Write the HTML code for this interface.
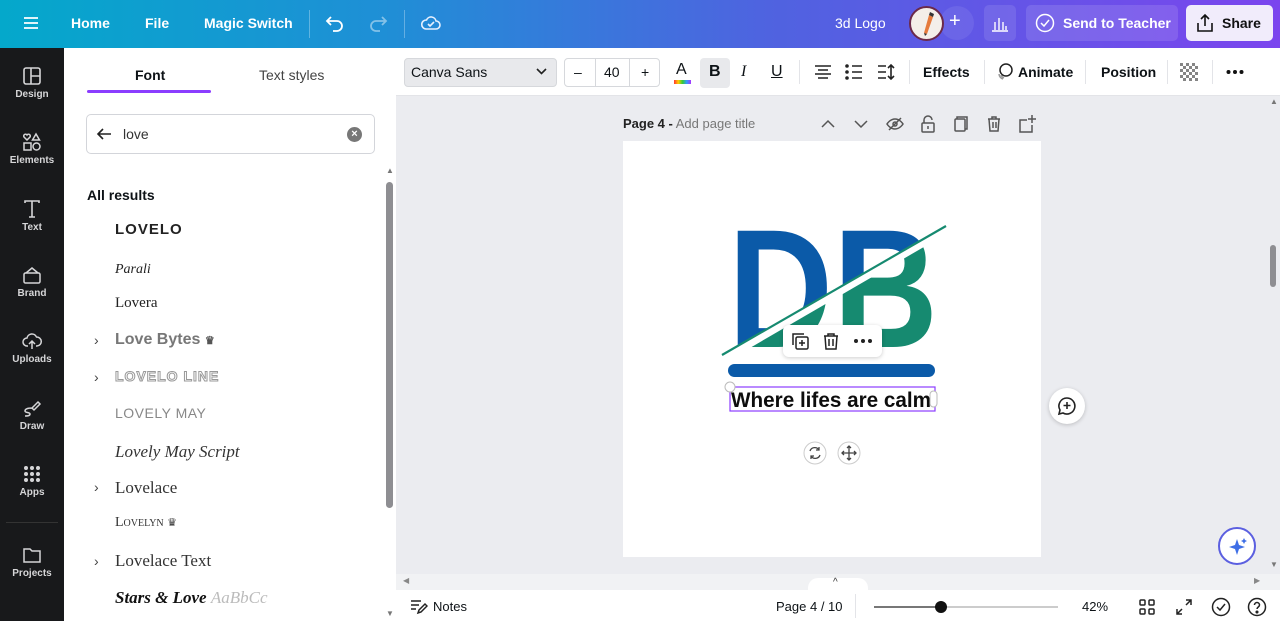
<!DOCTYPE html>
<html><head><meta charset="utf-8"><style>
*{box-sizing:border-box;margin:0;padding:0}
body{width:1280px;height:621px;overflow:hidden;font-family:"Liberation Sans",sans-serif;background:#ebecf0;position:relative;color:#0d1216}
.abs{position:absolute}
.top{left:0;top:0;width:1280px;height:48px;background:linear-gradient(90deg,#04a8cb 0%,#1f8fd6 30%,#4f63e0 60%,#7b45ee 100%)}
.top .t{position:absolute;top:15px;color:#fff;font-weight:bold;font-size:14px}
.side{left:0;top:48px;width:64px;height:573px;background:#18191b}
.side .it{position:absolute;left:0;width:64px;text-align:center;color:#d6d6d8;font-size:10px;font-weight:bold}
.side svg{display:block;margin:0 auto 3px}
.panel{left:64px;top:48px;width:332px;height:573px;background:#fff}
.tb{left:396px;top:48px;width:884px;height:48px;background:#fff;border-bottom:1px solid #e3e4e8}
.tb .t{position:absolute;top:16px;font-size:14px;font-weight:bold;color:#0d1216}
.font{position:absolute;left:34px;font-size:15px;color:#222}
.chev{position:absolute;left:30px;font-size:14px;color:#444}
.bot{left:396px;top:590px;width:884px;height:31px;background:#fff}
</style></head><body>
<div class="abs top">
  <svg class="abs" style="left:23px;top:15px" width="16" height="16" viewBox="0 0 16 16"><path d="M1 3h14M1 8h14M1 13h14" stroke="#fff" stroke-width="1.8"/></svg>
  <span class="t" style="left:71px">Home</span>
  <span class="t" style="left:145px">File</span>
  <span class="t" style="left:204px">Magic Switch</span>
  <div class="abs" style="left:309px;top:10px;width:1px;height:28px;background:rgba(255,255,255,.3)"></div>
  <svg class="abs" style="left:325px;top:13px" width="20" height="20" viewBox="0 0 20 20" fill="none" stroke="#fff" stroke-width="1.8"><path d="M6 4L2 8l4 4M2 8h10a5 5 0 010 10H8"/></svg>
  <svg class="abs" style="left:368px;top:13px" width="20" height="20" viewBox="0 0 20 20" fill="none" stroke="rgba(255,255,255,.45)" stroke-width="1.8"><path d="M14 4l4 4-4 4M18 8H8a5 5 0 000 10h4"/></svg>
  <div class="abs" style="left:404px;top:10px;width:1px;height:28px;background:rgba(255,255,255,.3)"></div>
  <svg class="abs" style="left:420px;top:12px" width="22" height="22" viewBox="0 0 22 22" fill="none" stroke="#e6f0ff" stroke-width="1.6"><path d="M6 17h10a4 4 0 000-8 5 5 0 00-9.5-1A4.5 4.5 0 006 17z"/><path d="M8 12l2 2 4-4"/></svg>
  <span class="t" style="left:835px;font-weight:normal;color:#fff">3d Logo</span>
  <div class="abs" style="left:940px;top:6px;width:34px;height:34px;border-radius:50%;background:rgba(255,255,255,.08)"></div>
  <div class="abs" style="left:909px;top:6px;width:35px;height:35px;border-radius:50%;background:#f4efe9;border:2px solid #6b2a4a"></div>
  <svg class="abs" style="left:917px;top:11px" width="20" height="26" viewBox="0 0 20 26"><path d="M7 22L12 4l4 2-6 17z" fill="#e57a3c"/><path d="M12 4l4 2 1-3-4-2z" fill="#333"/><path d="M7 22l3 1-2 2z" fill="#333"/></svg>
  <span class="t" style="left:949px;font-size:20px;top:10px;font-weight:normal">+</span>
  <div class="abs" style="left:984px;top:5px;width:32px;height:36px;border-radius:5px;background:rgba(255,255,255,.1)"></div>
  <svg class="abs" style="left:990px;top:13px" width="20" height="20" viewBox="0 0 20 20" stroke="#fff" stroke-width="1.4"><path d="M2 18h16M5 17V9M9 17V5M13 17V9M16 17v-4"/></svg>
  <div class="abs" style="left:1026px;top:5px;width:152px;height:36px;border-radius:5px;background:rgba(255,255,255,.12)"></div>
  <svg class="abs" style="left:1035px;top:13px" width="20" height="20" viewBox="0 0 20 20" fill="none" stroke="#fff" stroke-width="1.5"><circle cx="10" cy="10" r="8.5"/><path d="M6 10l3 3 5-6"/></svg>
  <span class="t" style="left:1063px">Send to Teacher</span>
  <div class="abs" style="left:1186px;top:5px;width:87px;height:36px;border-radius:5px;background:#f1ecfb"></div>
  <svg class="abs" style="left:1195px;top:13px" width="20" height="20" viewBox="0 0 20 20" fill="none" stroke="#111" stroke-width="1.6"><path d="M10 13V2M6 6l4-4 4 4M3 10v8h14v-8"/></svg>
  <span class="t" style="left:1222px;color:#111">Share</span>
</div>

<div class="abs side">
  <div class="it" style="top:18px"><svg width="20" height="20" viewBox="0 0 20 20" fill="none" stroke="#d6d6d8" stroke-width="1.6"><rect x="2" y="2" width="16" height="16" rx="2"/><path d="M9 2v16M9 10h9"/></svg>Design</div>
  <div class="it" style="top:84px"><svg width="20" height="20" viewBox="0 0 20 20" fill="none" stroke="#d6d6d8" stroke-width="1.5"><path d="M5 8L2 5a1.7 1.7 0 013-2 1.7 1.7 0 013 2z"/><path d="M14 2l3.5 6h-7z"/><rect x="2" y="11" width="7" height="7"/><circle cx="14.5" cy="14.5" r="3.5"/></svg>Elements</div>
  <div class="it" style="top:151px"><svg width="20" height="20" viewBox="0 0 20 20" fill="none" stroke="#d6d6d8" stroke-width="1.6"><path d="M3 4V2h14v2M10 2v16M7 18h6"/></svg>Text</div>
  <div class="it" style="top:217px"><svg width="20" height="20" viewBox="0 0 20 20" fill="none" stroke="#d6d6d8" stroke-width="1.5"><rect x="2" y="8" width="16" height="10" rx="1.5"/><path d="M4 8l6-5 6 5"/></svg>Brand</div>
  <div class="it" style="top:283px"><svg width="20" height="20" viewBox="0 0 20 20" fill="none" stroke="#d6d6d8" stroke-width="1.5"><path d="M6 15H5a4 4 0 010-8 5 5 0 019.5-1A4 4 0 0115 15h-1M10 18V10M7 13l3-3 3 3"/></svg>Uploads</div>
  <div class="it" style="top:350px"><svg width="20" height="20" viewBox="0 0 20 20" fill="none" stroke="#d6d6d8" stroke-width="1.5"><path d="M10 10l6-6 2 2-6 6zM10 10c-4 0-7 1-7 3s5 1 5 3-3 2-5 2"/></svg>Draw</div>
  <div class="it" style="top:416px"><svg width="20" height="20" viewBox="0 0 20 20" fill="#d6d6d8"><circle cx="4" cy="4" r="2"/><circle cx="10" cy="4" r="2"/><circle cx="16" cy="4" r="2"/><circle cx="4" cy="10" r="2"/><circle cx="10" cy="10" r="2"/><circle cx="16" cy="10" r="2"/><circle cx="4" cy="16" r="2"/><circle cx="10" cy="16" r="2"/><circle cx="16" cy="16" r="2"/></svg>Apps</div>
  <div class="abs" style="left:6px;top:474px;width:52px;height:1px;background:#333"></div>
  <div class="it" style="top:497px"><svg width="20" height="20" viewBox="0 0 20 20" fill="none" stroke="#d6d6d8" stroke-width="1.5"><path d="M2 4h6l2 2h8v11H2z"/></svg>Projects</div>
</div>

<div class="abs panel">
  <div class="abs" style="left:71px;top:19px;font-size:14px;font-weight:bold">Font</div>
  <div class="abs" style="left:195px;top:19px;font-size:14px;color:#444">Text styles</div>
  <div class="abs" style="left:23px;top:42px;width:124px;height:3px;background:#8b3dff;border-radius:2px"></div>
  <div class="abs" style="left:22px;top:66px;width:289px;height:40px;border:1px solid #d3d5da;border-radius:5px"></div>
  <svg class="abs" style="left:32px;top:78px" width="16" height="16" viewBox="0 0 16 16" fill="none" stroke="#222" stroke-width="1.6"><path d="M15 8H2M7 3L2 8l5 5"/></svg>
  <div class="abs" style="left:59px;top:78px;font-size:14px;color:#333">love</div>
  <div class="abs" style="left:283px;top:79px;width:15px;height:15px;border-radius:50%;background:#777;color:#fff;font-size:11px;text-align:center;line-height:15px;font-weight:bold">×</div>
  <div class="abs" style="left:23px;top:139px;font-size:14px;font-weight:bold">All results</div>
  <div class="font" style="left:51px;top:173px;font-weight:bold;letter-spacing:1px;font-size:15px">LOVELO</div>
  <div class="font" style="left:51px;top:214px;font-family:'Liberation Serif',serif;font-style:italic;font-size:14px">Parali</div>
  <div class="font" style="left:51px;top:247px;font-family:'Liberation Serif',serif;font-size:15px">Lovera</div>
  <div class="chev" style="top:284px">›</div><div class="font" style="left:51px;top:283px;font-weight:bold;color:#777;font-size:16px">Love Bytes <span style="font-size:11px;color:#555">♛</span></div>
  <div class="chev" style="top:321px">›</div><div class="font" style="left:51px;top:320px;font-weight:bold;color:#fff;-webkit-text-stroke:1px #999;letter-spacing:1px;font-size:14px">LOVELO LINE</div>
  <div class="font" style="left:51px;top:357px;color:#888;font-size:14px;letter-spacing:.5px;font-weight:lighter">LOVELY MAY</div>
  <div class="font" style="left:51px;top:394px;font-family:'Liberation Serif',serif;font-style:italic;font-size:17px;color:#333">Lovely May Script</div>
  <div class="chev" style="top:431px">›</div><div class="font" style="left:51px;top:430px;font-family:'Liberation Serif',serif;font-size:17px;color:#333">Lovelace</div>
  <div class="font" style="left:51px;top:467px;font-family:'Liberation Serif',serif;font-size:14px;color:#333;font-variant:small-caps">Lovelyn <span style="font-size:11px">♛</span></div>
  <div class="chev" style="top:505px">›</div><div class="font" style="left:51px;top:503px;font-family:'Liberation Serif',serif;font-size:17px;color:#333">Lovelace Text</div>
  <div class="font" style="left:51px;top:540px;font-family:'Liberation Serif',serif;font-style:italic;font-weight:bold;font-size:17px;color:#111">Stars &amp; Love <span style="color:#bbb;font-weight:normal">AaBbCc</span></div>
  <div class="abs" style="left:322px;top:134px;width:7px;height:326px;border-radius:4px;background:#8e8e92"></div>
  <div class="abs" style="left:322px;top:118px;font-size:8px;color:#777">▲</div>
  <div class="abs" style="left:322px;top:561px;font-size:8px;color:#777">▼</div>
</div>

<div class="abs tb">
  <div class="abs" style="left:8px;top:10px;width:153px;height:29px;border-radius:4px;background:#e8e9ec;border:1px solid #d6d8dc"></div>
  <span class="t" style="left:15px;font-weight:normal">Canva Sans</span>
  <svg class="abs" style="left:140px;top:20px" width="11" height="8" viewBox="0 0 11 8" fill="none" stroke="#222" stroke-width="1.6"><path d="M1 1l4.5 4.5L10 1"/></svg>
  <div class="abs" style="left:168px;top:10px;width:96px;height:29px;border-radius:4px;border:1px solid #d6d8dc"></div>
  <div class="abs" style="left:199px;top:10px;width:1px;height:29px;background:#d6d8dc"></div>
  <div class="abs" style="left:233px;top:10px;width:1px;height:29px;background:#d6d8dc"></div>
  <span class="t" style="left:178px;font-weight:normal">–</span>
  <span class="t" style="left:208px;font-weight:normal">40</span>
  <span class="t" style="left:245px;font-weight:normal">+</span>
  <span class="t" style="left:280px;font-weight:normal;font-size:16px;top:13px">A</span>
  <div class="abs" style="left:278px;top:32px;width:17px;height:4px;background:linear-gradient(90deg,#f33,#fc0,#3c3,#39f,#a3f)"></div>
  <div class="abs" style="left:304px;top:10px;width:30px;height:30px;border-radius:4px;background:#e8e9ec"></div>
  <span class="t" style="left:313px;font-size:16px;top:15px">B</span>
  <span class="t" style="left:345px;font-size:16px;top:15px;font-style:italic;font-family:'Liberation Serif',serif;font-weight:normal">I</span>
  <span class="t" style="left:375px;font-size:16px;top:15px;text-decoration:underline;font-weight:normal">U</span>
  <div class="abs" style="left:403px;top:12px;width:1px;height:24px;background:#e3e4e8"></div>
  <svg class="abs" style="left:418px;top:16px" width="18" height="16" viewBox="0 0 18 16" stroke="#222" stroke-width="1.6"><path d="M1 2h16M4 6h10M1 10h16M4 14h10"/></svg>
  <svg class="abs" style="left:449px;top:16px" width="18" height="16" viewBox="0 0 18 16"><g fill="#222"><circle cx="2" cy="2" r="1.8"/><circle cx="2" cy="8" r="1.8"/><circle cx="2" cy="14" r="1.8"/></g><path d="M7 2h10M7 8h10M7 14h10" stroke="#222" stroke-width="1.6"/></svg>
  <svg class="abs" style="left:481px;top:15px" width="18" height="18" viewBox="0 0 18 18" stroke="#222" stroke-width="1.6" fill="none"><path d="M1 3h8M1 9h8M1 15h8M14 2v14M11 5l3-3 3 3M11 13l3 3 3-3"/></svg>
  <div class="abs" style="left:513px;top:12px;width:1px;height:24px;background:#e3e4e8"></div>
  <span class="t" style="left:527px">Effects</span>
  <div class="abs" style="left:588px;top:12px;width:1px;height:24px;background:#e3e4e8"></div>
  <svg class="abs" style="left:600px;top:14px" width="20" height="20" viewBox="0 0 20 20" fill="none" stroke="#222" stroke-width="1.5"><circle cx="10" cy="8" r="6"/><path d="M5 13a6 6 0 003 3M3 12a6 6 0 004 5" stroke="#999"/></svg>
  <span class="t" style="left:622px">Animate</span>
  <div class="abs" style="left:689px;top:12px;width:1px;height:24px;background:#e3e4e8"></div>
  <span class="t" style="left:705px">Position</span>
  <div class="abs" style="left:771px;top:12px;width:1px;height:24px;background:#e3e4e8"></div>
  <svg class="abs" style="left:784px;top:15px" width="18" height="18" viewBox="0 0 18 18" fill="#333"><path d="M0 0h3v3H0zM6 0h3v3H6zM12 0h3v3h-3zM3 3h3v3H3zM9 3h3v3H9zM15 3h3v3h-3zM0 6h3v3H0zM6 6h3v3H6zM12 6h3v3h-3zM3 9h3v3H3zM9 9h3v3H9zM15 9h3v3h-3zM0 12h3v3H0zM6 12h3v3H6zM12 12h3v3h-3zM3 15h3v3H3zM9 15h3v3H9zM15 15h3v3h-3z" opacity=".6"/></svg>
  <div class="abs" style="left:816px;top:12px;width:1px;height:24px;background:#e3e4e8"></div>
  <svg class="abs" style="left:830px;top:21px" width="18" height="6" viewBox="0 0 18 6" fill="#111"><circle cx="2.5" cy="3" r="2"/><circle cx="9" cy="3" r="2"/><circle cx="15.5" cy="3" r="2"/></svg>
</div>

<div class="abs" style="left:623px;top:116px;font-size:13px"><b style="color:#222">Page 4 -</b> <span style="color:#777">Add page title</span></div>
<svg class="abs" style="left:818px;top:112px" width="220" height="24" viewBox="0 0 220 24" fill="none" stroke="#555" stroke-width="1.5">
  <path d="M4 15l6-6 6 6M37 9l6 6 6-6"/>
  <path d="M69 12s3-5 8-5 8 5 8 5-3 5-8 5-8-5-8-5zM71 18l12-12"/><circle cx="77" cy="12" r="2"/>
  <rect x="104" y="11" width="12" height="9" rx="1"/><path d="M106 11V8a4 4 0 018 0M110 14v3"/>
  <rect x="137" y="7" width="10" height="12" rx="1"/><path d="M139 7V5h10v12h-2"/>
  <path d="M170 7h12M174 7V5h4v2M171 7l1 12h8l1-12M175 10v6M178 10v6"/>
  <path d="M209 8h-7v12h12v-7M214 3v8M210 7h8"/>
</svg>
<div class="abs" style="left:1270px;top:97px;font-size:8px;color:#777">▲</div>
<div class="abs" style="left:1270px;top:245px;width:6px;height:42px;border-radius:3px;background:#8e8e92"></div>
<div class="abs" style="left:1270px;top:560px;font-size:8px;color:#777">▼</div>

<div class="abs" style="left:623px;top:141px;width:418px;height:416px;background:#fff"></div>
<svg class="abs" style="left:700px;top:200px" width="270" height="280" viewBox="700 200 270 280">
  <defs>
    <clipPath id="up"><polygon points="700,200 970,200 970,212 700,368"/></clipPath>
    <clipPath id="dn"><polygon points="700,368 970,212 970,480 700,480"/></clipPath>
  </defs>
  <g font-family="Liberation Sans, sans-serif" font-weight="bold" font-size="169">
    <text x="728" y="347" textLength="210" lengthAdjust="spacingAndGlyphs" fill="#0b5aa8" clip-path="url(#up)">DB</text>
    <text x="728" y="347" textLength="210" lengthAdjust="spacingAndGlyphs" fill="#168a70" clip-path="url(#dn)">DB</text>
  </g>
  <path d="M716 363L952 226" stroke="#fff" stroke-width="8"/>
  <path d="M722 355L946 226" stroke="#168a70" stroke-width="2.2"/>
  <rect x="728" y="364" width="207" height="13" rx="6.5" fill="#0b5aa8"/>
  <rect x="730" y="387" width="205" height="24" fill="none" stroke="#8b3dff" stroke-width="1.2"/>
  <text x="731" y="407" font-family="Liberation Sans, sans-serif" font-weight="bold" font-size="21" textLength="200" lengthAdjust="spacingAndGlyphs" fill="#0d0d0d">Where lifes are calm</text>
  <circle cx="730" cy="387" r="5" fill="#fff" stroke="#bbb"/>
  <rect x="930" y="391" width="7" height="16" rx="3.5" fill="#fff" stroke="#bbb"/>
  <circle cx="815" cy="453" r="11" fill="#fff" stroke="#ccc"/>
  <path d="M810 451a5 5 0 019-1M820 455a5 5 0 01-9 1M819 447v3h-3M811 459v-3h3" stroke="#444" stroke-width="1.3" fill="none"/>
  <circle cx="849" cy="453" r="11" fill="#fff" stroke="#ccc"/>
  <path d="M849 446v14M842 453h14M847 448l2-2 2 2M847 458l2 2 2-2M844 451l-2 2 2 2M854 451l2 2-2 2" stroke="#444" stroke-width="1.3" fill="none"/>
</svg>
<div class="abs" style="left:783px;top:325px;width:99px;height:32px;background:#fff;border-radius:6px;box-shadow:0 1px 4px rgba(0,0,0,.2)"></div>
<svg class="abs" style="left:790px;top:331px" width="90" height="20" viewBox="0 0 90 20" fill="none" stroke="#222" stroke-width="1.5">
  <rect x="6" y="6" width="12" height="12" rx="1.5"/><path d="M3 14V3h11M12 9v6M9 12h6"/>
  <path d="M34 5h14M38 5V3h6v2M35 5l1 13h10l1-13M39 8v7M43 8v7"/>
  <g fill="#222" stroke="none"><circle cx="66" cy="10" r="2"/><circle cx="73" cy="10" r="2"/><circle cx="80" cy="10" r="2"/></g>
</svg>
<div class="abs" style="left:1049px;top:388px;width:36px;height:36px;border-radius:50%;background:#fff;box-shadow:0 1px 4px rgba(0,0,0,.2)"></div>
<svg class="abs" style="left:1057px;top:396px" width="20" height="20" viewBox="0 0 20 20" fill="none" stroke="#222" stroke-width="1.6"><path d="M10 2a8 8 0 00-7 12l-1 4 4-1A8 8 0 1010 2zM10 6v7M6.5 9.5h7"/></svg>
<div class="abs" style="left:1218px;top:527px;width:38px;height:38px;border-radius:50%;background:#fff;border:2px solid #5b5fe0"></div>
<svg class="abs" style="left:1228px;top:537px" width="20" height="20" viewBox="0 0 20 20" fill="#3f6fe6"><path d="M9 2l2 6 6 2-6 2-2 6-2-6-6-2 6-2z"/><path d="M16 1l1 2 2 1-2 1-1 2-1-2-2-1 2-1z"/></svg>

<div class="abs" style="left:396px;top:574px;width:884px;height:16px;background:#f1f2f4"></div>
<div class="abs" style="left:403px;top:576px;font-size:8px;color:#888">◀</div>
<div class="abs" style="left:1254px;top:576px;font-size:8px;color:#888">▶</div>
<div class="abs" style="left:808px;top:578px;width:60px;height:14px;background:#fff;border-radius:10px 10px 0 0"></div>
<div class="abs" style="left:833px;top:577px;font-size:10px;color:#333">^</div>
<div class="abs bot">
  <svg class="abs" style="left:14px;top:9px" width="18" height="16" viewBox="0 0 18 16" fill="none" stroke="#222" stroke-width="1.5"><path d="M1 2h10M1 6h8M1 10h5M8 14l1-3 6-6 2 2-6 6z"/></svg>
  <span class="abs" style="left:37px;top:9px;font-size:13px">Notes</span>
  <span class="abs" style="left:380px;top:9px;font-size:13px">Page 4 / 10</span>
  <div class="abs" style="left:459px;top:4px;width:1px;height:24px;background:#e3e4e8"></div>
  <div class="abs" style="left:478px;top:16px;width:184px;height:2px;background:#ccc"></div>
  <div class="abs" style="left:478px;top:16px;width:67px;height:2px;background:#777"></div>
  <div class="abs" style="left:539px;top:11px;width:12px;height:12px;border-radius:50%;background:#111"></div>
  <span class="abs" style="left:686px;top:9px;font-size:13px">42%</span>
  <svg class="abs" style="left:743px;top:9px" width="16" height="16" viewBox="0 0 16 16" fill="none" stroke="#222" stroke-width="1.5"><rect x="1" y="1" width="5" height="5" rx="1"/><rect x="10" y="1" width="5" height="5" rx="1"/><rect x="1" y="10" width="5" height="5" rx="1"/><rect x="10" y="10" width="5" height="5" rx="1"/></svg>
  <svg class="abs" style="left:779px;top:8px" width="18" height="18" viewBox="0 0 18 18" fill="none" stroke="#222" stroke-width="1.5"><path d="M11 2h5v5M16 2l-5 5M7 16H2v-5M2 16l5-5"/></svg>
  <svg class="abs" style="left:815px;top:7px" width="20" height="20" viewBox="0 0 20 20" fill="none" stroke="#222" stroke-width="1.5"><circle cx="10" cy="10" r="8.5"/><path d="M6 10l3 3 5-6"/></svg>
  <svg class="abs" style="left:851px;top:7px" width="20" height="20" viewBox="0 0 20 20" fill="none" stroke="#222" stroke-width="1.5"><circle cx="10" cy="10" r="8.5"/><path d="M7.5 8a2.5 2.5 0 115 0c0 2-2.5 2-2.5 4"/><circle cx="10" cy="15" r=".8" fill="#222"/></svg>
</div>
</body></html>
